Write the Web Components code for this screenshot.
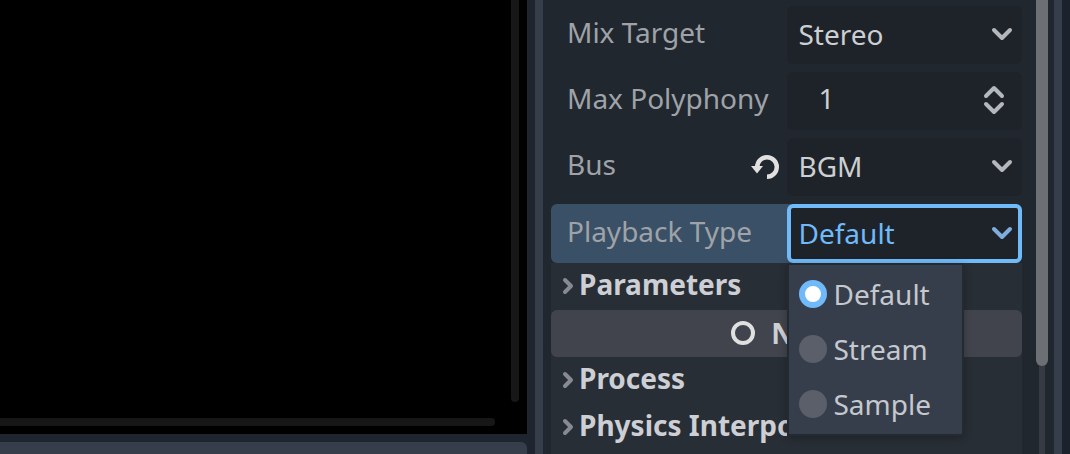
<!DOCTYPE html>
<html lang="en">
<head>
<meta charset="utf-8">
<title>Inspector</title>
<style>
  body { margin: 0; background: #1f252e; font-family: "Noto Sans", sans-serif; font-size: 28px; color: #cdcfd2; }
</style>
</head>
<body>
<editor-shell>
  <editor-viewport slot="main"></editor-viewport>
  <inspector-dock slot="dock">
    <property-row label="Mix Target"><option-field label="Mix Target" value="Stereo"></option-field></property-row>
    <property-row label="Max Polyphony"><number-field label="Max Polyphony" value="1"></number-field></property-row>
    <property-row label="Bus" revert><option-field label="Bus" value="BGM"></option-field></property-row>
    <property-row label="Playback Type" active>
      <option-field label="Playback Type" value="Default" open><radio-menu items="Default,Stream,Sample"></radio-menu></option-field>
    </property-row>
    <section-group slot="sections">
      <fold-section>Parameters</fold-section>
      <class-header>Node</class-header>
      <fold-section>Process</fold-section>
      <fold-section>Physics Interpo</fold-section>
    </section-group>
  </inspector-dock>
</editor-shell>
<script>
const define = (name, markup, setup) => customElements.define(name, class extends HTMLElement {
  constructor() {
    super();
    this.attachShadow({ mode: 'open' });
  }
  connectedCallback() {
    if (this.shadowRoot.childNodes.length) return;
    const t = document.createElement('template');
    t.innerHTML = '<style>*{box-sizing:border-box}</style>' + markup;
    this.shadowRoot.append(t.content.cloneNode(true));
    if (setup) setup(this, this.shadowRoot);
  }
});

define('editor-shell', `
<style>
  :host { display: grid; grid-template-columns: 1fr 1fr; height: 100vh; overflow: hidden; }
  main { display: flex; flex-direction: column; gap: 8px; padding-right: 8px; min-width: 0; }
  ::slotted([slot=main]) { flex: 1; }
  .bottom { height: 12px; background: #373e4b; border-radius: 0 6px 0 0; }
</style>
<main><slot name="main"></slot><div class="bottom"></div></main>
<slot name="dock"></slot>`);

define('editor-viewport', `
<style>
  :host { display: grid; grid-template-columns: 1fr 8px; grid-template-rows: 1fr 8px; gap: 16px; padding: 0 8px 8px 0; background: #000; }
  div { background: #171717; }
  .v { grid-area: 1 / 2; border-radius: 0 0 4px 4px; }
  .h { grid-area: 2 / 1; border-radius: 0 4px 4px 0; }
</style>
<div class="v"></div><div class="h"></div>`);

define('inspector-dock', `
<style>
  :host { display: flex; padding-right: 8px; background: #1c222c; min-width: 0; }
  .frame { flex: 1; display: flex; gap: 14px; min-width: 0; padding: 0 6px 0 8px; background: #21272e; border: solid #373e4b; border-width: 0 8px; }
  .list { flex: 1; min-width: 0; display: flex; flex-direction: column; }
  .rows { display: flex; flex-direction: column; gap: 8px; padding-top: 6px; }
  ::slotted([slot=sections]) { flex: 1; }
  .track { width: 12px; background: linear-gradient(#363b43, #363b43) center / 6px 100% no-repeat; }
  .thumb { height: 366px; background: #6c7075; border-radius: 0 0 6px 6px; }
</style>
<div class="frame">
  <div class="list"><div class="rows"><slot></slot></div><slot name="sections"></slot></div>
  <div class="track"><div class="thumb"></div></div>
</div>`);

define('property-row', `
<style>
  :host { display: grid; grid-template-columns: 1fr 1fr; height: 58px; }
  :host([active]) { height: 59px; background: #3a5066; border-radius: 6px; }
  .name { display: flex; align-items: center; justify-content: space-between; padding: 0 8px 6px 16px; color: #9fa3a8; white-space: nowrap; }
  button { display: flex; padding: 6px 0 0; border: 0; background: none; }
</style>
<div class="name"><span></span></div><slot></slot>`, (el, root) => {
  root.querySelector('span').textContent = el.getAttribute('label');
  if (el.hasAttribute('revert')) {
    root.querySelector('.name').insertAdjacentHTML('beforeend', `
<button aria-label="Revert"><svg width="28" height="28" viewBox="0 0 28 28"><path d="M6.2 14a9.8 9.8 0 1 1 9.8 9.8" fill="none" stroke="#e0e0e0" stroke-width="4.4"/><path d="M0 13h12L6 20.5z" fill="#e0e0e0"/></svg></button>`);
  }
});

define('option-field', `
<style>
  :host { display: grid; position: relative; align-items: center; background: #1e2329; border-radius: 6px; color: #cdcfd2; min-width: 0; }
  select { grid-area: 1 / 1; width: 100%; height: 100%; appearance: none; font: inherit; color: inherit; background: none; border: 4px solid transparent; border-radius: 6px; padding: 0 40px 2px 8px; outline: 0; }
  svg { grid-area: 1 / 1; justify-self: end; margin: 0 9px 2px 0; pointer-events: none; }
  path { fill: none; stroke: #b4b7bb; stroke-width: 4; stroke-linecap: round; stroke-linejoin: round; }
  :host([open]) { color: #70bafa; }
  :host([open]) select { border-color: #70bafa; }
  :host([open]) path { stroke: #7eacdc; }
  ::slotted(radio-menu) { position: absolute; top: calc(100% + 2px); left: 2px; z-index: 1; }
</style>
<select><option></option></select>
<svg width="22" height="14" viewBox="0 0 22 14"><path d="M3 3l8 8 8-8"/></svg>
<slot></slot>`, (el, root) => {
  root.querySelector('select').setAttribute('aria-label', el.getAttribute('label'));
  root.querySelector('option').textContent = el.getAttribute('value');
});

define('number-field', `
<style>
  :host { display: flex; align-items: center; background: #1e2329; border-radius: 6px; min-width: 0; }
  input { flex: 1; min-width: 0; height: 100%; appearance: textfield; font: inherit; color: #cdcfd2; background: none; border: 0; padding: 0 0 6px 32px; outline: 0; }
  svg { margin: 0 16px 2px 0; }
  path { fill: none; stroke: #b4b7bb; stroke-width: 4; stroke-linecap: round; stroke-linejoin: round; }
</style>
<input type="number">
<svg width="24" height="32" viewBox="0 0 24 32"><path d="M4 12l8-8 8 8M4 20l8 8 8-8"/></svg>`, (el, root) => {
  const input = root.querySelector('input');
  input.setAttribute('aria-label', el.getAttribute('label'));
  input.value = el.getAttribute('value');
});

define('radio-menu', `
<style>
  :host { display: block; width: 173px; padding: 1px 0 3px; background: #373e4b; color: #c5c8ce; box-shadow: 0 0 0 2px #242a32, 0 2px 8px 2px #00000040; }
  label { display: flex; align-items: center; gap: 7px; height: 55px; padding-left: 10px; }
  input { appearance: none; width: 28px; height: 28px; margin: 0; border-radius: 50%; background: #5a5f69; }
  input:checked { background: #fff; border: 6px solid #70bafa; }
</style>`, (el, root) => {
  el.getAttribute('items').split(',').forEach((text, i) => {
    const label = document.createElement('label');
    const input = document.createElement('input');
    const span = document.createElement('span');
    input.type = 'radio';
    input.name = 'choice';
    input.checked = i === 0;
    span.textContent = text;
    label.append(input, span);
    root.append(label);
  });
});

define('section-group', `
<style>:host { display: block; background: #282e35; }</style><slot></slot>`);

define('fold-section', `
<style>
  :host { display: block; height: 47px; }
  button { display: flex; align-items: center; gap: 5px; width: 100%; height: 100%; padding: 0 0 6px 11px; border: 0; background: none; color: #cdcfd4; font: inherit; font-weight: 700; white-space: nowrap; overflow: hidden; }
  svg { flex: none; margin-top: 4px; }
  path { fill: none; stroke: #878b91; stroke-width: 4; stroke-linecap: round; stroke-linejoin: round; }
</style>
<button><svg width="12" height="18" viewBox="0 0 12 18"><path d="M3 3l6 6-6 6"/></svg><slot></slot></button>`);

define('class-header', `
<style>
  :host { display: block; height: 47px; }
  button { display: flex; align-items: center; justify-content: center; gap: 14px; width: 100%; height: 100%; padding: 0 0 2px 2px; border: 0; border-radius: 6px; background: #41444c; color: #cdcfd4; font: inherit; font-weight: 700; }
</style>
<button><svg width="28" height="28" viewBox="0 0 28 28"><circle cx="14" cy="14" r="10" fill="none" stroke="#e0e0e0" stroke-width="4"/></svg><slot></slot></button>`);
</script>
</body>
</html>
